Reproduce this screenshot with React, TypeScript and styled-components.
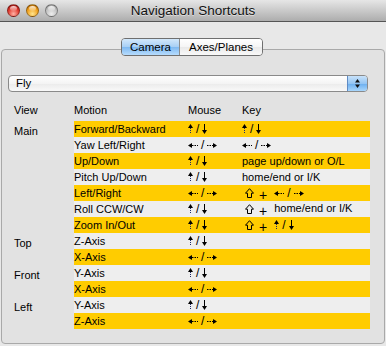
import React from 'react'
import styled, { createGlobalStyle, css } from 'styled-components'

const GlobalStyle = createGlobalStyle`
  html, body {
    margin: 0;
    padding: 0;
  }
  body {
    background: #e8e8e8;
    font-family: 'Liberation Sans', Arial, sans-serif;
    color: #000;
  }
`

const Window = styled.div`
  width: 386px;
  height: 346px;
  display: flex;
  flex-direction: column;
  overflow: hidden;
  background: #e8e8e8;
`

const TitleBar = styled.div`
  height: 21px;
  border-bottom: 1px solid #555;
  background: linear-gradient(#e6e6e6, #adadad);
  display: grid;
  grid-template-columns: 1fr auto 1fr;
  align-items: center;
`

const Lights = styled.div`
  display: flex;
  gap: 6px;
  padding-left: 7px;
`

const lightTones = {
  red: ['#ffb3a6', '#e0372c', '#8f1010'],
  yellow: ['#ffe590', '#f0a01c', '#a35a00'],
  gray: ['#ededed', '#c2c2c2', '#8e8e8e'],
}

const Light = styled.span<{ $tone: keyof typeof lightTones }>`
  position: relative;
  width: 13px;
  height: 13px;
  box-sizing: border-box;
  border-radius: 50%;
  border: 1px solid rgba(0, 0, 0, 0.35);
  ${({ $tone }) => css`
    background: radial-gradient(
      circle at 50% 80%,
      ${lightTones[$tone][0]} 0%,
      ${lightTones[$tone][1]} 55%,
      ${lightTones[$tone][2]} 100%
    );
  `}
  &::after {
    content: '';
    position: absolute;
    left: 2px;
    right: 2px;
    top: 1px;
    height: 5px;
    border-radius: 50%;
    background: linear-gradient(rgba(255, 255, 255, 0.85), rgba(255, 255, 255, 0.1));
  }
`

const Title = styled.div`
  font-size: 13.5px;
  color: #111;
  text-shadow: 0 1px 0 rgba(255, 255, 255, 0.5);
`

const Content = styled.div`
  flex: 1;
  display: flex;
  flex-direction: column;
  padding-top: 16px;
`

const Segmented = styled.div`
  position: relative;
  z-index: 1;
  align-self: center;
  margin-left: -2px;
  display: flex;
  height: 18px;
  box-sizing: border-box;
  border: 1px solid #6f6f6f;
  border-radius: 4px;
  overflow: hidden;
`

const Segment = styled.div<{ $active?: boolean; $width: number }>`
  width: ${({ $width }) => $width}px;
  text-align: center;
  font-size: 11.5px;
  line-height: 16px;
  background: ${({ $active }) =>
    $active
      ? 'linear-gradient(#d3e8fb 0%, #a7cff5 50%, #7fb9f1 51%, #b6dcfd 100%)'
      : 'linear-gradient(#ffffff 0%, #f5f5f5 50%, #e9e9e9 51%, #f9f9f9 100%)'};
  & + & {
    border-left: 1px solid #8c8c8c;
  }
`

const Panel = styled.div`
  flex: 1;
  margin: -7px 1px 2px 1px;
  border: 1px solid #a9a9a9;
  border-radius: 4px;
  background: #e2e2e2;
  padding: 25px 0 0 6px;
`

const Select = styled.div`
  display: flex;
  width: 360px;
  height: 17px;
  box-sizing: border-box;
  border: 1px solid #8a8a8a;
  border-radius: 4px;
  overflow: hidden;
  background: linear-gradient(#ffffff 0%, #f4f4f4 50%, #ebebeb 51%, #f9f9f9 100%);
  font-size: 11.5px;
`

const SelectValue = styled.div`
  flex: 1;
  padding-left: 7px;
  line-height: 15px;
`

const SelectButton = styled.div`
  width: 19px;
  border-left: 1px solid #5f8bc4;
  background: linear-gradient(#c8e2fa 0%, #94c5f3 50%, #6aaeef 51%, #a9d6fc 100%);
  display: flex;
  align-items: center;
  justify-content: center;
`

const Table = styled.div`
  margin: 10px 0 0 6px;
  font-size: 11px;
`

const HeaderRow = styled.div`
  display: grid;
  grid-template-columns: 60px 114px 54px 1fr;
  height: 16px;
  line-height: 16px;
  margin-bottom: 3px;
`

const Row = styled.div`
  display: flex;
  height: 16px;
  line-height: 16px;
`

const ViewCell = styled.div`
  width: 60px;
  padding-top: 2px;
`

const Stripe = styled.div<{ $yellow: boolean }>`
  width: 296px;
  display: grid;
  grid-template-columns: 114px 54px 1fr;
  align-items: center;
  background: ${({ $yellow }) => ($yellow ? '#ffcc00' : '#eeeeee')};
`

const Cell = styled.div`
  display: flex;
  align-items: center;
  height: 16px;
  white-space: nowrap;
`

const ArrowPair = styled.span`
  display: inline-flex;
  align-items: center;
  gap: 3px;
`

const Slash = styled.span`
  font-size: 12px;
`

const Plus = styled.span`
  font-size: 14px;
  line-height: 12px;
  margin: 3px 7px 0 5px;
`

const ShiftWrap = styled.span`
  display: inline-flex;
  margin-left: 3px;
`

const RaisedText = styled.span`
  line-height: 12px;
  margin-bottom: 3px;
`

const UpArrow = () => (
  <svg width="5" height="10" viewBox="0 0 5 10">
    <polygon points="2.5,0 5,4 0,4" fill="#000" />
    <line x1="2.5" y1="4" x2="2.5" y2="10" stroke="#1b2a6b" strokeWidth="1" strokeDasharray="1 1" />
  </svg>
)

const DownArrow = () => (
  <svg width="5" height="10" viewBox="0 0 5 10">
    <line x1="2.5" y1="0" x2="2.5" y2="6" stroke="#000" strokeWidth="1" />
    <polygon points="0,6 5,6 2.5,10" fill="#000" />
  </svg>
)

const LeftArrow = () => (
  <svg width="10" height="5" viewBox="0 0 10 5">
    <polygon points="0,2.5 4,0 4,5" fill="#000" />
    <line x1="4" y1="2.5" x2="10" y2="2.5" stroke="#000" strokeWidth="1" strokeDasharray="1.5 1" />
  </svg>
)

const RightArrow = () => (
  <svg width="10" height="5" viewBox="0 0 10 5">
    <line x1="0" y1="2.5" x2="6" y2="2.5" stroke="#000" strokeWidth="1" strokeDasharray="1.5 1" />
    <polygon points="6,0 10,2.5 6,5" fill="#000" />
  </svg>
)

const ShiftIcon = () => (
  <svg width="9" height="10" viewBox="0 0 9 10">
    <path d="M4.5 0.7 L8.5 5.2 L6.5 5.2 L6.5 9.5 L2.5 9.5 L2.5 5.2 L0.5 5.2 Z" fill="none" stroke="#000" strokeWidth="1" />
  </svg>
)

const SelectArrowsIcon = () => (
  <svg width="5" height="9" viewBox="0 0 5 9">
    <polygon points="2.5,0 5,3.5 0,3.5" fill="#111" />
    <polygon points="0,5.5 5,5.5 2.5,9" fill="#111" />
  </svg>
)

const UpDown = () => (
  <ArrowPair>
    <UpArrow />
    <Slash>/</Slash>
    <DownArrow />
  </ArrowPair>
)

const LeftRight = () => (
  <ArrowPair>
    <LeftArrow />
    <Slash>/</Slash>
    <RightArrow />
  </ArrowPair>
)

const Shift: React.FC<{ children: React.ReactNode }> = ({ children }) => (
  <>
    <ShiftWrap>
      <ShiftIcon />
    </ShiftWrap>
    <Plus>+</Plus>
    {children}
  </>
)

interface RowData {
  view?: string
  motion: string
  mouse: React.ReactNode
  key?: React.ReactNode
}

const rows: RowData[] = [
  { view: 'Main', motion: 'Forward/Backward', mouse: <UpDown />, key: <UpDown /> },
  { motion: 'Yaw Left/Right', mouse: <LeftRight />, key: <LeftRight /> },
  { motion: 'Up/Down', mouse: <UpDown />, key: 'page up/down or O/L' },
  { motion: 'Pitch Up/Down', mouse: <UpDown />, key: 'home/end or I/K' },
  { motion: 'Left/Right', mouse: <LeftRight />, key: <Shift><LeftRight /></Shift> },
  { motion: 'Roll CCW/CW', mouse: <UpDown />, key: <Shift><RaisedText>home/end or I/K</RaisedText></Shift> },
  { motion: 'Zoom In/Out', mouse: <UpDown />, key: <Shift><UpDown /></Shift> },
  { view: 'Top', motion: 'Z-Axis', mouse: <UpDown /> },
  { motion: 'X-Axis', mouse: <LeftRight /> },
  { view: 'Front', motion: 'Y-Axis', mouse: <UpDown /> },
  { motion: 'X-Axis', mouse: <LeftRight /> },
  { view: 'Left', motion: 'Y-Axis', mouse: <UpDown /> },
  { motion: 'Z-Axis', mouse: <LeftRight /> },
]

const App: React.FC = () => {
  return (
    <>
      <GlobalStyle />
      <Window>
        <TitleBar>
          <Lights>
            <Light $tone="red" />
            <Light $tone="yellow" />
            <Light $tone="gray" />
          </Lights>
          <Title>Navigation Shortcuts</Title>
          <span />
        </TitleBar>
        <Content>
          <Segmented>
            <Segment $active $width={57}>Camera</Segment>
            <Segment $width={82}>Axes/Planes</Segment>
          </Segmented>
          <Panel>
            <Select>
              <SelectValue>Fly</SelectValue>
              <SelectButton>
                <SelectArrowsIcon />
              </SelectButton>
            </Select>
            <Table>
              <HeaderRow>
                <div>View</div>
                <div>Motion</div>
                <div>Mouse</div>
                <div>Key</div>
              </HeaderRow>
              {rows.map((r, i) => (
                <Row key={i}>
                  <ViewCell>{r.view}</ViewCell>
                  <Stripe $yellow={i % 2 === 0}>
                    <Cell>{r.motion}</Cell>
                    <Cell>{r.mouse}</Cell>
                    <Cell>{r.key}</Cell>
                  </Stripe>
                </Row>
              ))}
            </Table>
          </Panel>
        </Content>
      </Window>
    </>
  )
}

export default App
